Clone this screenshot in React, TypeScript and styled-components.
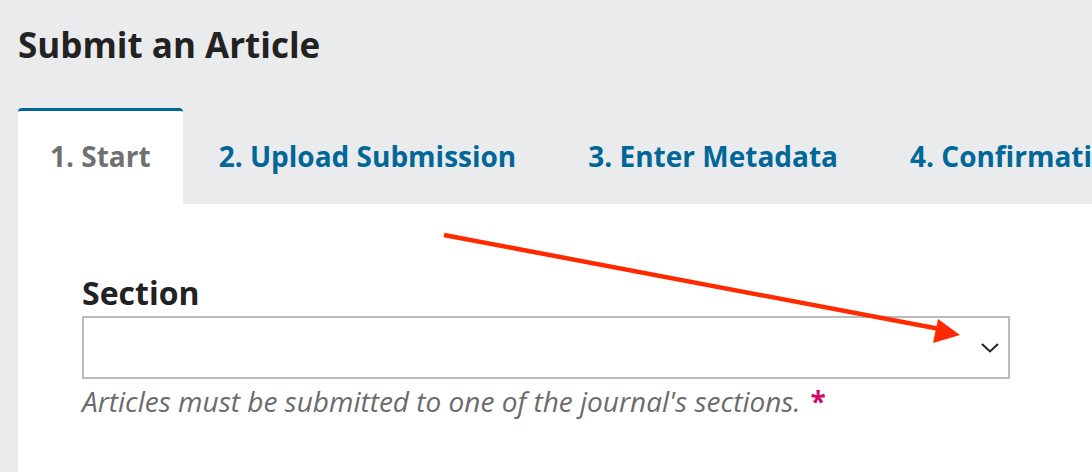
import React from "react";
import styled, { createGlobalStyle } from "styled-components";

const Global = createGlobalStyle`
  html, body { margin: 0; padding: 0; }
  body {
    background: #eaebed;
    font-family: "Open Sans", "Noto Sans", sans-serif;
    width: 1092px;
    height: 472px;
    overflow: hidden;
  }
`;

const Page = styled.div`
  position: relative;
  padding-left: 18px;
  height: 472px;
  overflow: hidden;
`;

const Title = styled.h1`
  margin: 0;
  padding-top: 20px;
  font-size: 35px;
  line-height: 49px;
  font-weight: 700;
  color: #222;
`;

const TabBar = styled.div`
  display: flex;
  margin-top: 39px;
  height: 96px;
  white-space: nowrap;
`;

const Tab = styled.div<{ $active?: boolean }>`
  display: flex;
  align-items: center;
  padding: 0 ${(p) => (p.$active ? "32px" : "36px")} 3px;
  font-size: 28px;
  font-weight: 700;
  color: ${(p) => (p.$active ? "#707070" : "#006798")};
  background: ${(p) => (p.$active ? "#fff" : "transparent")};
  border-top: 3px solid ${(p) => (p.$active ? "#006798" : "transparent")};
  border-radius: 4px 4px 0 0;
  box-sizing: border-box;
`;

const Panel = styled.div`
  background: #fff;
  padding: 70px 82px 0 64px;
  height: 300px;
`;

const Label = styled.div`
  font-size: 32px;
  font-weight: 700;
  color: #222;
  line-height: 38px;
  margin-bottom: 4px;
`;

const SelectBox = styled.div`
  box-sizing: border-box;
  height: 63px;
  border: 2px solid #bbbbbb;
  display: flex;
  align-items: center;
  justify-content: flex-end;
  padding-right: 8px;
`;

const Help = styled.div`
  margin-top: 4px;
  font-size: 28px;
  font-style: italic;
  color: #6b6b6b;
  line-height: 36px;
`;

const Required = styled.span`
  color: #d00a6c;
  font-style: normal;
  font-weight: 700;
  margin-left: 10px;
`;

const Arrow = styled.svg`
  position: absolute;
  left: 0;
  top: 0;
  pointer-events: none;
`;

export default function App() {
  return (
    <>
      <Global />
      <Page>
        <Title>Submit an Article</Title>
        <TabBar>
          <Tab $active>1. Start</Tab>
          <Tab>2. Upload Submission</Tab>
          <Tab>3. Enter Metadata</Tab>
          <Tab>4. Confirmation</Tab>
        </TabBar>
        <Panel>
          <Label>Section</Label>
          <SelectBox>
            <svg width="20" height="12" viewBox="0 0 20 12">
              <path d="M2 2 L10 9.5 L18 2" fill="none" stroke="#222" strokeWidth="2" />
            </svg>
          </SelectBox>
          <Help>
            Articles must be submitted to one of the journal's sections.
            <Required>*</Required>
          </Help>
        </Panel>
        <Arrow width="1092" height="472" viewBox="0 0 1092 472">
          <line x1="444" y1="235" x2="945" y2="330" stroke="#ff2a00" strokeWidth="4.5" />
          <polygon points="960,335 938,319 933,343" fill="#ff2a00" />
        </Arrow>
      </Page>
    </>
  );
}
